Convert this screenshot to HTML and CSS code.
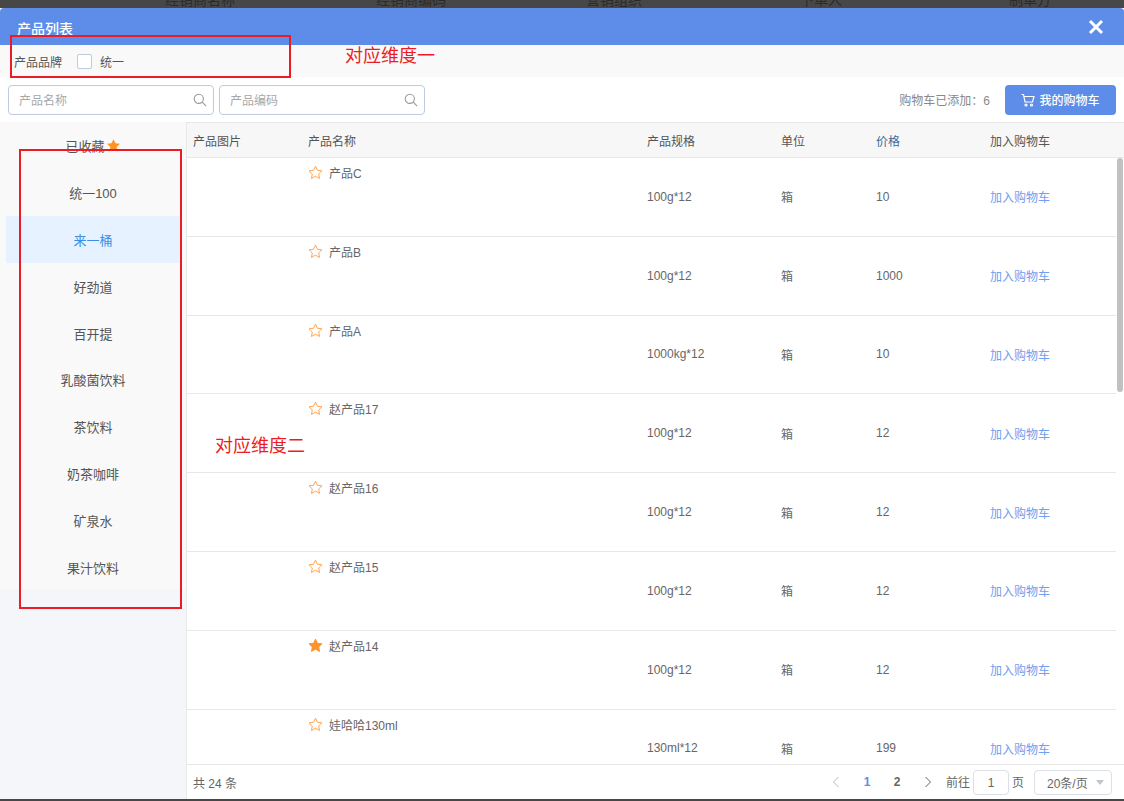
FILE: index.html
```html
<!DOCTYPE html>
<html lang="zh">
<head>
  <meta charset="UTF-8">
  <title>产品列表</title>
  <link rel="stylesheet" href="styles.css">
</head>
<body>
  <svg class="defs" width="0" height="0">
    <symbol id="star" viewBox="0 0 16 16"><path d="M8 1.2l2.1 4.4 4.8.6-3.5 3.3.9 4.8L8 11.9l-4.3 2.4.9-4.8L1.1 6.200l4.800-.6z"/></symbol>
    <symbol id="search" viewBox="0 0 14 14"><circle cx="5.800" cy="5.800" r="4.600"/><path d="M9.200 9.200l4 4"/></symbol>
  </svg>

  <div class="backdrop">
    <span class="bd-a">经销商名称</span>
    <span class="bd-b">经销商编码</span>
    <span class="bd-c">营销组织</span>
    <span class="bd-d">下单人</span>
    <span class="bd-e">制单方</span>
  </div>

  <div class="dialog">
    <header class="dialog-head">
      <span class="dialog-title">产品列表</span>
      <svg class="close" width="16" height="16" viewBox="0 0 16 16"><path d="M2 2l12 12M14 2L2 14"/></svg>
    </header>

    <div class="brand-bar">
      <span class="brand-label">产品品牌</span>
      <span class="checkbox"></span>
      <span>统一</span>
    </div>

    <div class="toolbar">
      <div class="search-box"><span>产品名称</span><svg class="search-icon"><use href="#search"/></svg></div>
      <div class="search-box"><span>产品编码</span><svg class="search-icon"><use href="#search"/></svg></div>
      <span class="cart-count">购物车已添加：6</span>
      <button class="cart-btn">
        <svg width="14" height="14" viewBox="0 0 14 14"><path d="M.5 1.500h2l1.500 7.500h7.500L13 3.500H3"/><circle cx="5" cy="12" r="1"/><circle cx="10.500" cy="12" r="1"/></svg>
        我的购物车
      </button>
    </div>

    <div class="main">
      <aside class="side">
        <ul class="side-list">
          <li>已收藏<svg class="side-star"><use href="#star"/></svg></li>
          <li>统一100</li>
          <li class="active">来一桶</li>
          <li>好劲道</li>
          <li>百开提</li>
          <li>乳酸菌饮料</li>
          <li>茶饮料</li>
          <li>奶茶咖啡</li>
          <li>矿泉水</li>
          <li>果汁饮料</li>
        </ul>
      </aside>

      <section class="content">
        <div class="row head-row">
          <div>产品图片</div><div>产品名称</div><div>产品规格</div><div>单位</div><div class="price-head">价格</div><div>加入购物车</div>
        </div>
        <div class="rows">
          <div class="row item"><div></div><div class="name"><svg class="star"><use href="#star"/></svg>产品C</div><div>100g*12</div><div>箱</div><div>10</div><div class="add">加入购物车</div></div>
          <div class="row item"><div></div><div class="name"><svg class="star"><use href="#star"/></svg>产品B</div><div>100g*12</div><div>箱</div><div>1000</div><div class="add">加入购物车</div></div>
          <div class="row item"><div></div><div class="name"><svg class="star"><use href="#star"/></svg>产品A</div><div>1000kg*12</div><div>箱</div><div>10</div><div class="add">加入购物车</div></div>
          <div class="row item"><div></div><div class="name"><svg class="star"><use href="#star"/></svg>赵产品17</div><div>100g*12</div><div>箱</div><div>12</div><div class="add">加入购物车</div></div>
          <div class="row item"><div></div><div class="name"><svg class="star"><use href="#star"/></svg>赵产品16</div><div>100g*12</div><div>箱</div><div>12</div><div class="add">加入购物车</div></div>
          <div class="row item"><div></div><div class="name"><svg class="star"><use href="#star"/></svg>赵产品15</div><div>100g*12</div><div>箱</div><div>12</div><div class="add">加入购物车</div></div>
          <div class="row item"><div></div><div class="name"><svg class="star on"><use href="#star"/></svg>赵产品14</div><div>100g*12</div><div>箱</div><div>12</div><div class="add">加入购物车</div></div>
          <div class="row item"><div></div><div class="name"><svg class="star"><use href="#star"/></svg>娃哈哈130ml</div><div>130ml*12</div><div>箱</div><div>199</div><div class="add">加入购物车</div></div>
          <div class="scrollbar"></div>
        </div>
        <footer class="pager">
          <span class="total">共 24 条</span>
          <svg class="arrow off" width="8" height="12" viewBox="0 0 8 12"><path d="M6.500 1L1.500 6l5 5"/></svg>
          <span class="page current">1</span>
          <span class="page">2</span>
          <svg class="arrow" width="8" height="12" viewBox="0 0 8 12"><path d="M1.500 1l5 5-5 5"/></svg>
          <span class="goto">前往</span>
          <span class="page-input">1</span>
          <span class="goto">页</span>
          <span class="page-size">20条/页<i class="caret"></i></span>
        </footer>
      </section>
    </div>
  </div>
  <div class="backdrop-bottom"></div>

  <div class="note-box note-box-one"></div>
  <div class="note-box note-box-two"></div>
  <div class="note note-one">对应维度一</div>
  <div class="note note-two">对应维度二</div>
</body>
</html>
```

FILE: styles.css
```css
* { box-sizing: border-box; }
html, body { margin: 0; height: 100%; overflow: hidden; }
body { font-family: "Liberation Sans", "Noto Sans CJK SC", sans-serif; font-size: 12px; color: #555; background: #fff; position: relative; }
.defs { position: absolute; }

.backdrop { height: 8px; background: #474747; color: #2b2b2b; font-size: 14px; position: relative; overflow: hidden; }
.backdrop span { position: absolute; top: -11px; }
.bd-a { left: 165px; }
.bd-b { left: 376px; }
.bd-c { left: 586px; }
.bd-d { left: 800px; }
.bd-e { left: 1009px; }

.dialog { height: 791px; display: flex; flex-direction: column; }
.dialog-head { height: 37px; flex: none; background: #5d8de8; color: #fff; display: flex; align-items: center; justify-content: space-between; padding: 0 20px 0 17px; border-radius: 4px 4px 0 0; }
.dialog-title { font-size: 14px; font-weight: 500; margin-top: 2px; }
.close { fill: none; stroke: #fff; stroke-width: 3; }

.brand-bar { height: 32px; flex: none; background: #f9f9f9; display: flex; align-items: center; padding-left: 14px; color: #555; }
.brand-label { margin-right: 15px; }
.checkbox { width: 15px; height: 15px; background: #fff; border: 1px solid #bccbdd; border-radius: 2px; margin-right: 8px; }

.toolbar { height: 45px; flex: none; display: flex; align-items: center; padding: 0 8px; gap: 5px; }
.search-box { width: 206px; height: 30px; border: 1px solid #bccbdd; border-radius: 4px; display: flex; align-items: center; justify-content: space-between; padding: 0 6px 0 10px; color: #a8a8a8; }
.search-icon { width: 14px; height: 14px; fill: none; stroke: #999; stroke-width: 1.100; }
.cart-count { margin-left: auto; margin-right: 10px; color: #888; }
.cart-btn { width: 111px; height: 30px; border: 0; border-radius: 4px; background: #5d8de8; color: #fff; font: 12px "Liberation Sans", "Noto Sans CJK SC", sans-serif; font-weight: 500; display: flex; align-items: center; justify-content: center; gap: 4px; padding: 0; }
.cart-btn svg { fill: none; stroke: #fff; stroke-width: 1.200; }

.main { flex: 1; min-height: 0; display: flex; }
.side { width: 187px; flex: none; background: #f4f6fa; border-right: 1px solid #e8e8e8; }
.side-list { list-style: none; margin: 0; padding: 0 6px 0; background: #f9f9f9; height: 467px; }
.side-list li { height: 46.900px; display: flex; align-items: center; justify-content: center; font-size: 13px; color: #555; }
.side-list li.active { background: #e6f2ff; color: #3a8ee6; }
.side-star { width: 15px; height: 15px; fill: #ff9326; margin-left: 1px; }

.content { flex: 1; min-width: 0; display: flex; flex-direction: column; position: relative; }
.row { display: grid; grid-template-columns: 115px 339px 134px 95px 114px 1fr; padding-left: 6px; }
.head-row { height: 36px; flex: none; background: #f7f7f7; border-top: 1px solid #e8e8e8; border-bottom: 1px solid #e8e8e8; align-items: center; color: #555; }
.price-head { color: #3d6a99; }
.rows { flex: 1; min-height: 0; overflow: hidden; position: relative; }
.item { height: 78.800px; width: 929px; border-bottom: 1px solid #e8e8e8; align-items: center; color: #666; }
.name { align-self: start; display: flex; align-items: center; padding-top: 6px; color: #666; }
.star { width: 15px; height: 15px; margin-right: 6px; fill: #fff; stroke: #ff9f4a; stroke-width: 1; }
.star.on { fill: #ff9326; stroke: #ff9326; }
.add { color: #6ea0ee; }
.scrollbar { position: absolute; right: 1px; top: 0; width: 6px; height: 234px; border-radius: 3px; background: #c1c1c1; }

.pager { height: 35px; flex: none; border-top: 1px solid #e8e8e8; display: flex; align-items: center; padding: 0 12px 0 6px; color: #666; }
.total { margin-right: auto; }
.arrow { fill: none; stroke: #666; stroke-width: 1; }
.arrow.off { stroke: #bbb; }
.page { width: 30px; text-align: center; font-weight: 700; margin: 0 0 0 0; }
.arrow.off + .page { margin-left: 12px; }
.page + .arrow { margin: 0 14px 0 12px; }
.page.current { color: #5d8de8; }
.goto { margin-top: -2px; }
.page-input { width: 36px; height: 25px; margin: 0 3px; border: 1px solid #dcdfe6; border-radius: 4px; text-align: center; line-height: 24px; }
.page-size { width: 78px; height: 25px; margin-left: 10px; border: 1px solid #dcdfe6; border-radius: 4px; display: flex; align-items: center; justify-content: space-between; padding: 0 7px 0 12px; }
.caret { width: 0; height: 0; border-left: 4.500px solid transparent; border-right: 4.500px solid transparent; border-top: 5px solid #c0c4cc; }

.backdrop-bottom { height: 2px; background: #474747; position: absolute; left: 0; right: 0; bottom: 0; }

.note-box { position: absolute; border: 2px solid #ed1c24; }
.note-box-one { left: 10px; top: 35px; width: 281px; height: 43px; }
.note-box-two { left: 19px; top: 149px; width: 163px; height: 460px; }
.note { position: absolute; color: #ed1c24; font-size: 18px; line-height: 24px; }
.note-one { left: 345px; top: 44px; }
.note-two { left: 215px; top: 434px; }
```
